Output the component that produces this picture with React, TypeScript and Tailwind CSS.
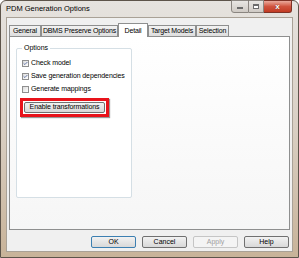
import { Check } from 'lucide-react';

const font = { fontFamily: '"Liberation Sans", Arial, sans-serif' };

function Tab({ label, w, active }: { label: string; w: number; active?: boolean }) {
  if (active) {
    return (
      <div
        className="relative z-10 -mb-px flex h-[14px] items-start justify-center whitespace-nowrap border border-b-0 border-[#8e8f8f] bg-white pt-[2px] text-[7px] tracking-[-0.15px] text-black"
        style={{ width: w }}
      >
        {label}
      </div>
    );
  }
  return (
    <div
      className="mt-[2px] flex h-[11px] items-center justify-center whitespace-nowrap border border-b-0 border-[#8e8f8f] bg-gradient-to-b from-[#f2f2f2] to-[#dedede] text-[7px] tracking-[-0.15px] text-black"
      style={{ width: w }}
    >
      {label}
    </div>
  );
}

function CheckRow({ label, checked }: { label: string; checked?: boolean }) {
  return (
    <div className="flex h-[13px] items-center gap-[2px]">
      <div className="flex h-[7px] w-[7px] shrink-0 items-center justify-center border border-[#8f8f8f] bg-gradient-to-br from-[#dcdcdc] to-white">
        {checked && <Check className="h-[7px] w-[7px] text-[#4a5f97]" strokeWidth={4} />}
      </div>
      <span className="whitespace-nowrap text-[7px] tracking-[-0.1px] text-black">{label}</span>
    </div>
  );
}

function DlgButton({ label, disabled, def }: { label: string; disabled?: boolean; def?: boolean }) {
  return (
    <div
      className={`flex h-[12px] w-[45px] items-center justify-center rounded-[2px] border text-[7px] ${
        disabled
          ? 'border-[#c5c5c5] bg-[#f4f4f4] text-[#a0a0a0]'
          : def
          ? 'border-[#3c7fb1] bg-gradient-to-b from-[#f2f2f2] to-[#d8d8d8] text-black'
          : 'border-[#707070] bg-gradient-to-b from-[#f2f2f2] to-[#d8d8d8] text-black'
      }`}
    >
      {label}
    </div>
  );
}

export default function App() {
  return (
    <div className="h-[258px] w-[299px] bg-white" style={font}>
      <div className="flex h-full w-full flex-col rounded-t-[6px] border border-[#5d544a] bg-gradient-to-b from-[#e6e3df] via-[#d9cfc3] to-[#c8b399]">
        {/* Title bar */}
        <div className="flex h-[16px] items-start justify-between pl-[5px] pr-[6px]">
          <span className="whitespace-nowrap pt-[4px] text-[7.5px] leading-none text-black">PDM Generation Options</span>
          <div className="-mt-px flex h-[13px]">
            <div className="flex w-[18px] items-center justify-center rounded-bl-[3px] border border-[#8a8580] bg-gradient-to-b from-[#e8e6e3] to-[#cfcac4]">
              <div className="mt-[3px] h-[2px] w-[6px] border border-[#6b6b6b] bg-white" />
            </div>
            <div className="flex w-[15px] items-center justify-center border border-l-0 border-[#8a8580] bg-gradient-to-b from-[#e8e6e3] to-[#cfcac4]">
              <div className="h-[5px] w-[6px] border border-t-2 border-[#6b6b6b] bg-white" />
            </div>
            <div className="flex w-[28px] items-center justify-center rounded-br-[3px] border border-l-0 border-[#7e3226] bg-gradient-to-b from-[#e9a99c] via-[#d0533e] to-[#c23a22] text-[8px] font-bold leading-none text-white [text-shadow:0_0_1px_#5a1a10]">
              x
            </div>
          </div>
        </div>

        {/* Client area */}
        <div className="mx-[5px] mb-[5px] flex flex-1 flex-col border border-[#a9a196] bg-[#f0f0f0] px-[2px]">
          {/* Tabs */}
          <div className="mt-[5px] flex items-end">
            <Tab label="General" w={32} />
            <Tab label="DBMS Preserve Options" w={77} />
            <Tab label="Detail" w={30} active />
            <Tab label="Target Models" w={48} />
            <Tab label="Selection" w={33} />
          </div>
          {/* Tab page */}
          <div className="h-[194px] border border-[#8e8f8f] bg-gradient-to-b from-white to-[#f6f6f6] pl-[6px] pt-[11px]">
            <div className="relative h-[150px] w-[116px] rounded-[2px] border border-[#d5dfe5] bg-white px-[5px] pt-[8px]">
              <span className="absolute -top-[5px] left-[5px] bg-white px-[2px] text-[7px] leading-none text-black">Options</span>
              <CheckRow label="Check model" checked />
              <CheckRow label="Save generation dependencies" checked />
              <CheckRow label="Generate mappings" />
              <div className="-ml-[2px] mt-[2px] w-[89px] border-[3px] border-[#e8131b] p-[1px] shadow-[1px_1px_1px_rgba(0,0,0,0.4)]">
                <div className="flex h-[11px] items-center justify-center whitespace-nowrap rounded-[2px] border border-[#707070] bg-gradient-to-b from-[#f2f2f2] to-[#d8d8d8] text-[7px] tracking-[-0.1px] text-black">
                  Enable transformations
                </div>
              </div>
            </div>
          </div>
          {/* Buttons */}
          <div className="mt-[6px] flex justify-end gap-[6px] pr-[1px]">
            <DlgButton label="OK" def />
            <DlgButton label="Cancel" />
            <DlgButton label="Apply" disabled />
            <DlgButton label="Help" />
          </div>
        </div>
      </div>
    </div>
  );
}
